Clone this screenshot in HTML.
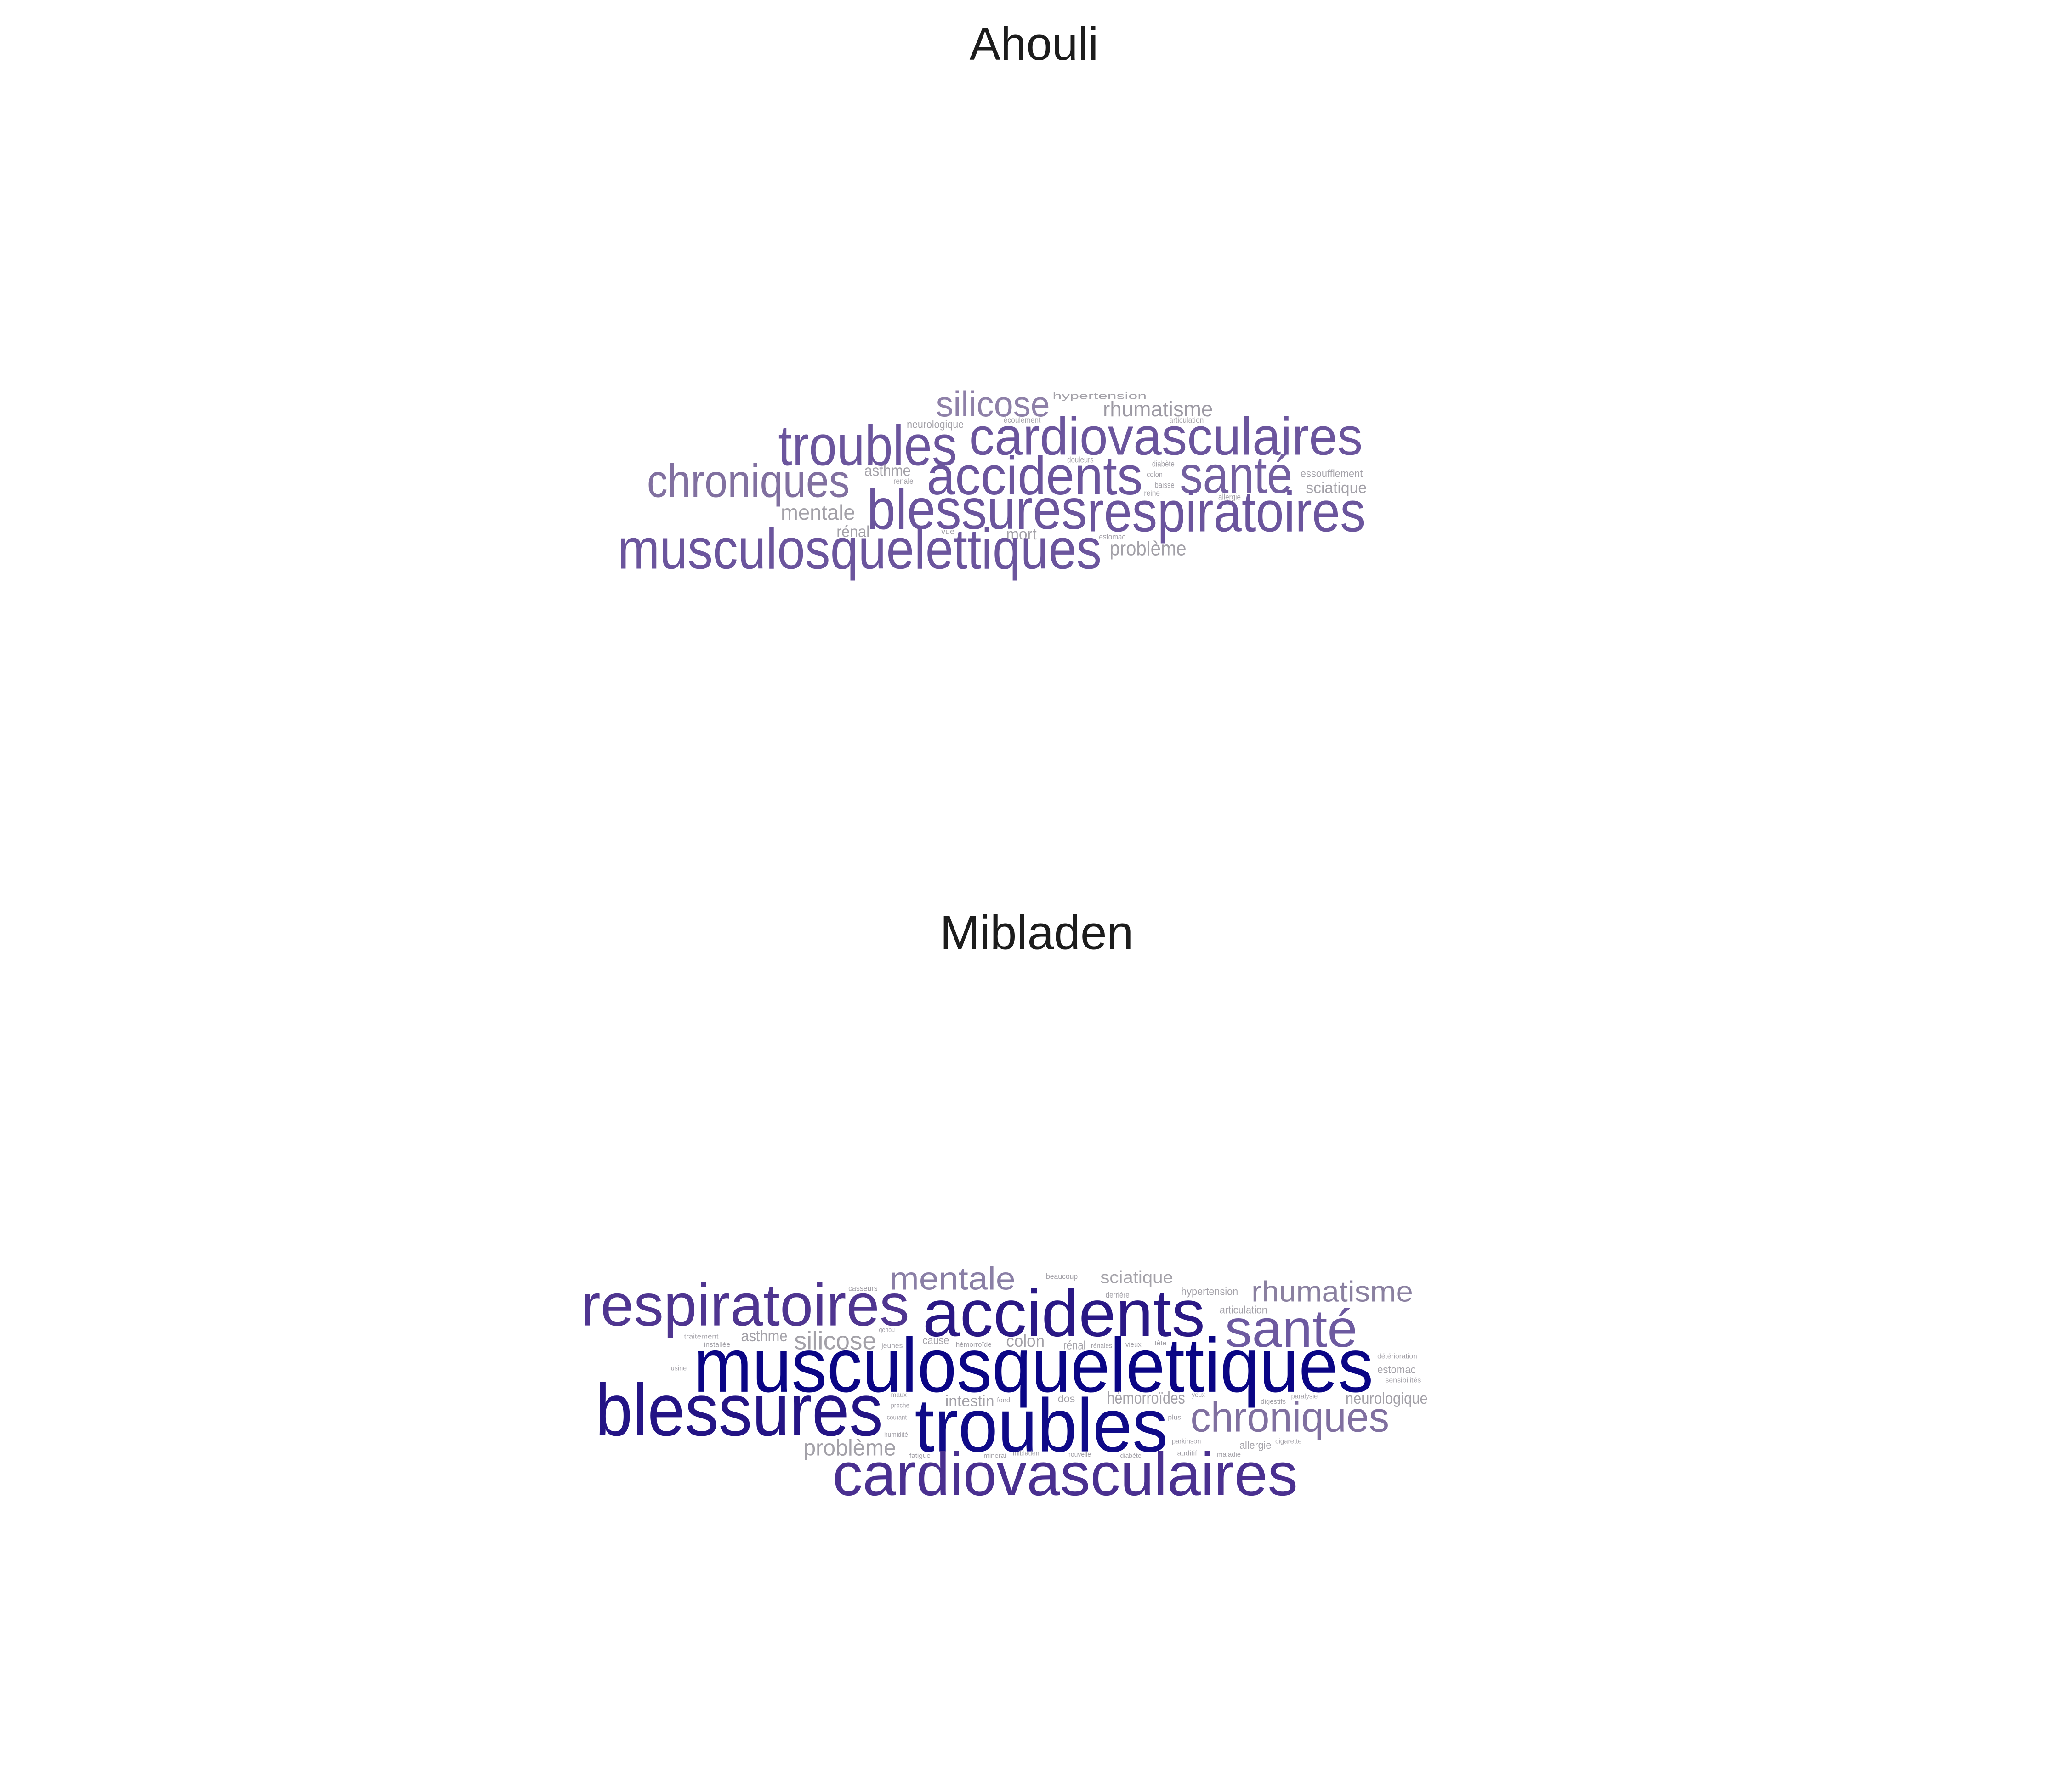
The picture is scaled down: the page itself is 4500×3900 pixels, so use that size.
<!DOCTYPE html>
<html><head><meta charset="utf-8"><style>
html,body{margin:0;padding:0;background:#fff;}
svg{display:block;}
text{font-family:"Liberation Sans",Arial,sans-serif;}
.g{fill:#a3a1a8;}
</style></head><body>
<svg width="4500" height="3900" viewBox="0 0 1560 1352" xmlns="http://www.w3.org/2000/svg">
<rect width="1560" height="1352" fill="#fff"/>
<text x="780" y="45" font-size="35" text-anchor="middle" fill="#1c1c1c">Ahouli</text>
<text x="782" y="716" font-size="36" text-anchor="middle" fill="#1c1c1c">Mibladen</text>

<!-- Ahouli -->
<g transform="translate(-3,-2)">
<text x="709" y="316" font-size="27" textLength="86" lengthAdjust="spacingAndGlyphs" fill="#8e80a8">silicose</text>
<text x="797" y="303" font-size="7" textLength="71" lengthAdjust="spacingAndGlyphs" class="g">hypertension</text>
<text x="835" y="316" font-size="16" textLength="83" lengthAdjust="spacingAndGlyphs" fill="#9c99a3">rhumatisme</text>
<text x="760" y="321" font-size="6" textLength="28" lengthAdjust="spacingAndGlyphs" class="g">écoulement</text>
<text x="885" y="321" font-size="6" textLength="26" lengthAdjust="spacingAndGlyphs" class="g">articulation</text>
<text x="687" y="325" font-size="8" textLength="43" lengthAdjust="spacingAndGlyphs" class="g">neurologique</text>
<text x="734" y="345" font-size="40" textLength="297" lengthAdjust="spacingAndGlyphs" fill="#6b559d">cardiovasculaires</text>
<text x="590" y="353" font-size="43" textLength="135" lengthAdjust="spacingAndGlyphs" fill="#6b559d">troubles</text>
<text x="808" y="351" font-size="6" textLength="20" lengthAdjust="spacingAndGlyphs" class="g">douleurs</text>
<text x="872" y="354" font-size="6" textLength="17" lengthAdjust="spacingAndGlyphs" class="g">diabète</text>
<text x="868" y="362" font-size="6" textLength="12" lengthAdjust="spacingAndGlyphs" class="g">colon</text>
<text x="874" y="370" font-size="6" textLength="15" lengthAdjust="spacingAndGlyphs" class="g">baisse</text>
<text x="866" y="376" font-size="6" textLength="12" lengthAdjust="spacingAndGlyphs" class="g">reine</text>
<text x="922" y="379" font-size="6" textLength="17" lengthAdjust="spacingAndGlyphs" class="g">allergie</text>
<text x="677" y="367" font-size="6" textLength="15" lengthAdjust="spacingAndGlyphs" class="g">rénale</text>
<text x="702" y="375" font-size="41" textLength="163" lengthAdjust="spacingAndGlyphs" fill="#6b559d">accidents</text>
<text x="893" y="374" font-size="40" textLength="85" lengthAdjust="spacingAndGlyphs" fill="#735fa0">santé</text>
<text x="491" y="377" font-size="35" textLength="153" lengthAdjust="spacingAndGlyphs" fill="#8170a0">chroniques</text>
<text x="655" y="361" font-size="12" textLength="35" lengthAdjust="spacingAndGlyphs" class="g">asthme</text>
<text x="984" y="362" font-size="8" textLength="47" lengthAdjust="spacingAndGlyphs" class="g">essoufflement</text>
<text x="988" y="374" font-size="12" textLength="46" lengthAdjust="spacingAndGlyphs" class="g">sciatique</text>
<text x="592" y="394" font-size="16" textLength="56" lengthAdjust="spacingAndGlyphs" class="g">mentale</text>
<text x="657" y="401" font-size="43" textLength="166" lengthAdjust="spacingAndGlyphs" fill="#6b559d">blessures</text>
<text x="823" y="403" font-size="43" textLength="210" lengthAdjust="spacingAndGlyphs" fill="#6b559d">respiratoires</text>
<text x="634" y="407" font-size="12" textLength="25" lengthAdjust="spacingAndGlyphs" class="g">rénal</text>
<text x="713" y="405" font-size="6" textLength="10" lengthAdjust="spacingAndGlyphs" class="g">vue</text>
<text x="762" y="409" font-size="12" textLength="23" lengthAdjust="spacingAndGlyphs" class="g">mort</text>
<text x="832" y="409" font-size="6" textLength="20" lengthAdjust="spacingAndGlyphs" class="g">estomac</text>
<text x="469" y="431" font-size="43" textLength="365" lengthAdjust="spacingAndGlyphs" fill="#6b559d">musculosquelettiques</text>
<text x="840" y="421" font-size="15" textLength="58" lengthAdjust="spacingAndGlyphs" class="g">problème</text>
</g>

<!-- Mibladen -->
<g transform="translate(-4,-5)">
<text x="675" y="978" font-size="24" textLength="95" lengthAdjust="spacingAndGlyphs" fill="#8a7fa6">mentale</text>
<text x="793" y="970" font-size="6" textLength="24" lengthAdjust="spacingAndGlyphs" class="g">beaucoup</text>
<text x="834" y="973" font-size="13" textLength="55" lengthAdjust="spacingAndGlyphs" class="g">sciatique</text>
<text x="644" y="979" font-size="6" textLength="22" lengthAdjust="spacingAndGlyphs" class="g">casseurs</text>
<text x="838" y="984" font-size="6" textLength="18" lengthAdjust="spacingAndGlyphs" class="g">derrière</text>
<text x="895" y="982" font-size="8" textLength="43" lengthAdjust="spacingAndGlyphs" class="g">hypertension</text>
<text x="948" y="987" font-size="22" textLength="122" lengthAdjust="spacingAndGlyphs" fill="#8a80a0">rhumatisme</text>
<text x="924" y="996" font-size="8" textLength="36" lengthAdjust="spacingAndGlyphs" class="g">articulation</text>
<text x="442" y="1005" font-size="45" textLength="248" lengthAdjust="spacingAndGlyphs" fill="#4f3590">respiratoires</text>
<text x="700" y="1013" font-size="50" textLength="213" lengthAdjust="spacingAndGlyphs" fill="#2a1885">accidents</text>
<text x="928" y="1021" font-size="40" textLength="100" lengthAdjust="spacingAndGlyphs" fill="#6d5aa0">santé</text>
<text x="520" y="1015" font-size="5" textLength="26" lengthAdjust="spacingAndGlyphs" class="g">traitement</text>
<text x="535" y="1021" font-size="5" textLength="20" lengthAdjust="spacingAndGlyphs" class="g">installée</text>
<text x="667" y="1010" font-size="5" textLength="12" lengthAdjust="spacingAndGlyphs" class="g">genou</text>
<text x="563" y="1017" font-size="12" textLength="35" lengthAdjust="spacingAndGlyphs" class="g">asthme</text>
<text x="603" y="1023" font-size="19" textLength="62" lengthAdjust="spacingAndGlyphs" fill="#a3a1a8">silicose</text>
<text x="669" y="1022" font-size="5" textLength="16" lengthAdjust="spacingAndGlyphs" class="g">jeunes</text>
<text x="700" y="1019" font-size="8" textLength="20" lengthAdjust="spacingAndGlyphs" class="g">cause</text>
<text x="725" y="1021" font-size="5" textLength="27" lengthAdjust="spacingAndGlyphs" class="g">hémorroïde</text>
<text x="763" y="1021" font-size="13" textLength="29" lengthAdjust="spacingAndGlyphs" class="g">colon</text>
<text x="806" y="1023" font-size="9" textLength="17" lengthAdjust="spacingAndGlyphs" class="g">rénal</text>
<text x="827" y="1022" font-size="5" textLength="16" lengthAdjust="spacingAndGlyphs" class="g">rénales</text>
<text x="853" y="1021" font-size="5" textLength="12" lengthAdjust="spacingAndGlyphs" class="g">vieux</text>
<text x="875" y="1020" font-size="5" textLength="9" lengthAdjust="spacingAndGlyphs" class="g">tête</text>
<text x="510" y="1039" font-size="5" textLength="12" lengthAdjust="spacingAndGlyphs" class="g">usine</text>
<text x="1043" y="1030" font-size="5" textLength="30" lengthAdjust="spacingAndGlyphs" class="g">détérioration</text>
<text x="1043" y="1041" font-size="8" textLength="29" lengthAdjust="spacingAndGlyphs" class="g">estomac</text>
<text x="1049" y="1048" font-size="5" textLength="27" lengthAdjust="spacingAndGlyphs" class="g">sensibilités</text>
<text x="527" y="1055" font-size="58" textLength="513" lengthAdjust="spacingAndGlyphs" fill="#0a0585">musculosquelettiques</text>
<text x="676" y="1059" font-size="5" textLength="12" lengthAdjust="spacingAndGlyphs" class="g">maux</text>
<text x="676" y="1067" font-size="5" textLength="14" lengthAdjust="spacingAndGlyphs" class="g">proche</text>
<text x="673" y="1076" font-size="5" textLength="15" lengthAdjust="spacingAndGlyphs" class="g">courant</text>
<text x="671" y="1089" font-size="5" textLength="18" lengthAdjust="spacingAndGlyphs" class="g">humidité</text>
<text x="717" y="1066" font-size="12" textLength="37" lengthAdjust="spacingAndGlyphs" class="g">intestin</text>
<text x="756" y="1063" font-size="5" textLength="10" lengthAdjust="spacingAndGlyphs" class="g">fond</text>
<text x="802" y="1063" font-size="8" textLength="13" lengthAdjust="spacingAndGlyphs" class="g">dos</text>
<text x="839" y="1064" font-size="13" textLength="59" lengthAdjust="spacingAndGlyphs" class="g">hémorroïdes</text>
<text x="903" y="1059" font-size="5" textLength="10" lengthAdjust="spacingAndGlyphs" class="g">yeux</text>
<text x="955" y="1064" font-size="5" textLength="19" lengthAdjust="spacingAndGlyphs" class="g">digestifs</text>
<text x="978" y="1060" font-size="5" textLength="20" lengthAdjust="spacingAndGlyphs" class="g">paralysie</text>
<text x="1019" y="1064" font-size="12" textLength="62" lengthAdjust="spacingAndGlyphs" class="g">neurologique</text>
<text x="453" y="1088" font-size="56" textLength="217" lengthAdjust="spacingAndGlyphs" fill="#241485">blessures</text>
<text x="694" y="1100" font-size="57" textLength="191" lengthAdjust="spacingAndGlyphs" fill="#0f0a88">troubles</text>
<text x="885" y="1076" font-size="5" textLength="10" lengthAdjust="spacingAndGlyphs" class="g">plus</text>
<text x="902" y="1085" font-size="32" textLength="150" lengthAdjust="spacingAndGlyphs" fill="#8070a0">chroniques</text>
<text x="888" y="1094" font-size="5" textLength="22" lengthAdjust="spacingAndGlyphs" class="g">parkinson</text>
<text x="939" y="1098" font-size="8" textLength="24" lengthAdjust="spacingAndGlyphs" class="g">allergie</text>
<text x="966" y="1094" font-size="5" textLength="20" lengthAdjust="spacingAndGlyphs" class="g">cigarette</text>
<text x="610" y="1103" font-size="17" textLength="70" lengthAdjust="spacingAndGlyphs" class="g">problème</text>
<text x="690" y="1105" font-size="5" textLength="16" lengthAdjust="spacingAndGlyphs" class="g">fatigue</text>
<text x="746" y="1105" font-size="5" textLength="17" lengthAdjust="spacingAndGlyphs" class="g">minerai</text>
<text x="768" y="1103" font-size="5" textLength="20" lengthAdjust="spacingAndGlyphs" class="g">mibladen</text>
<text x="809" y="1104" font-size="5" textLength="18" lengthAdjust="spacingAndGlyphs" class="g">nouvelle</text>
<text x="849" y="1105" font-size="5" textLength="16" lengthAdjust="spacingAndGlyphs" class="g">diabète</text>
<text x="892" y="1103" font-size="5" textLength="15" lengthAdjust="spacingAndGlyphs" class="g">auditif</text>
<text x="922" y="1104" font-size="5" textLength="18" lengthAdjust="spacingAndGlyphs" class="g">maladie</text>
<text x="632" y="1133" font-size="46" textLength="351" lengthAdjust="spacingAndGlyphs" fill="#4a3090">cardiovasculaires</text>
</g>
</svg>
</body></html>
